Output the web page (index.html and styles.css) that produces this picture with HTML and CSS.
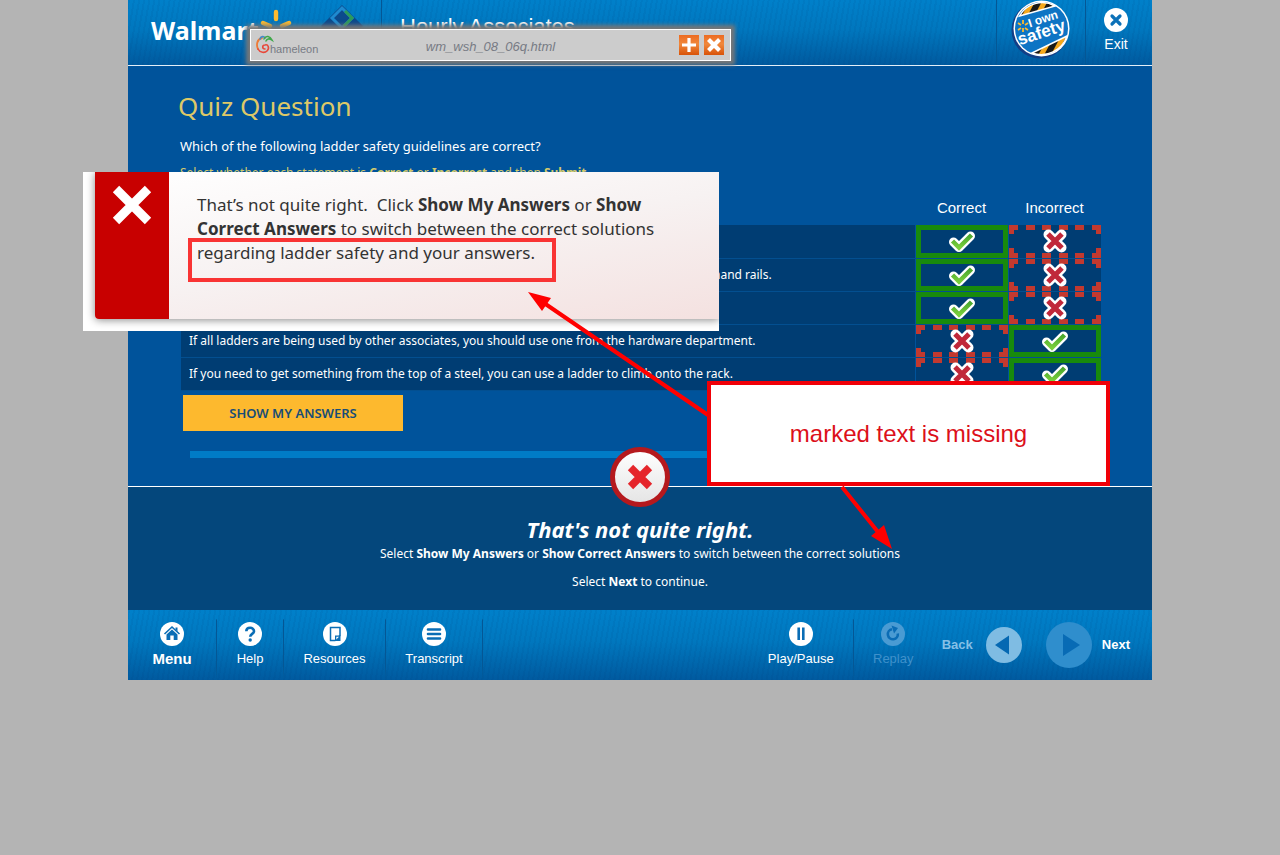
FILE: index.html
```html
<!DOCTYPE html>
<html lang="en">
<head>
<meta charset="utf-8">
<title>Quiz Question</title>
<link rel="stylesheet" href="styles.css">
</head>
<body>
<svg class="defs" aria-hidden="true">
  <defs>
    <linearGradient id="leaf" x1="0" y1="0" x2="0" y2="1"><stop offset="0" stop-color="#48a52d"/><stop offset="1" stop-color="#79cf3c"/></linearGradient>
    <linearGradient id="pearl" x1="0" y1="0" x2="0" y2="1"><stop offset="0" stop-color="#fff"/><stop offset="1" stop-color="#e4e4e4"/></linearGradient>
    <pattern id="hazard" width="11" height="11" patternUnits="userSpaceOnUse" patternTransform="rotate(28)"><rect width="11" height="11" fill="#f5a81c"/><rect width="6" height="11" fill="#1b1a18"/></pattern>
    <symbol id="check" viewBox="0 0 28 24">
      <path d="M5.500 13l5.500 5.500L22.500 7" fill="none" stroke="#fff" stroke-width="9" stroke-linecap="round" stroke-linejoin="round"/>
      <path d="M4.500 12l6.500 6.500L23.500 6" fill="none" stroke="url(#leaf)" stroke-width="4.500"/>
    </symbol>
    <symbol id="cross" viewBox="0 0 28 24">
      <path d="M7.500 5.500l13 13M20.500 5.500l-13 13" fill="none" stroke="#fff" stroke-width="10" stroke-linecap="round"/>
      <path d="M7 5l14 14M21 5L7 19" fill="none" stroke="#c0283a" stroke-width="5"/>
    </symbol>
  </defs>
</svg>
<main class="stage">
  <header class="top">
    <div class="brand">
      <span class="wordmark">Walmart</span>
      <svg class="spark" viewBox="0 0 32 34" width="32" height="34" stroke="#fdbb30" stroke-width="4.400" stroke-linecap="round"><path d="M16 4v7M16 25v7M3 15l7 3M22 22l7 3M29 15l-7 3M10 22l-7 3"/></svg>
      <svg class="diamond" viewBox="0 0 44 44" width="44" height="44"><path d="M22 1l21 21-21 21L1 22z" fill="#0c4a8c"/><path d="M22 4l10 10-10 10-10-10z" fill="none" stroke="#1e8ad0" stroke-width="3"/><path d="M25 7l7 7-8 8" fill="none" stroke="#2c9a5a" stroke-width="3"/></svg>
    </div>
    <h1 class="course">Hourly Associates</h1>
    <div class="safety">
      <svg viewBox="0 0 60 60" width="60" height="60" role="img" aria-label="I own safety">
        <circle cx="29" cy="30" r="28.500" fill="#123e86"/>
        <circle cx="30.500" cy="28.500" r="28" fill="#fff"/>
        <circle cx="30.500" cy="28.500" r="26.500" fill="#0d74c4"/>
        <path d="M8.500 16A26 26 0 0 1 44 6Z" fill="url(#hazard)" stroke="#fff" stroke-width="1.500"/>
        <path d="M21 53L56 36A27 27 0 0 1 21 53Z" fill="url(#hazard)" stroke="#fff" stroke-width="1.500"/>
        <path d="M12 20v4M12 28v4M7 23l3 2M14 28l3 2M17 23l-3 2M10 28l-3 2" stroke="#fdbb30" stroke-width="1.800"/>
        <g class="badge-text" transform="rotate(-18 30 30)"><text x="20" y="24" font-size="12">I own</text><text x="5" y="38" font-size="17">safety</text></g>
      </svg>
    </div>
    <button class="exit" type="button">
      <svg viewBox="0 0 24 24" width="24" height="24"><circle cx="12" cy="12" r="12" fill="#fff"/><path d="M8 8l8 8M16 8l-8 8" stroke="#0c71b8" stroke-width="3.200" stroke-linecap="round"/></svg>
      <span>Exit</span>
    </button>
  </header>

  <section class="quiz">
    <h2 class="quiz-title">Quiz Question</h2>
    <p class="question">Which of the following ladder safety guidelines are correct?</p>
    <p class="hint">Select whether each statement is <b>Correct</b> or <b>Incorrect</b> and then <b>Submit</b>.</p>
    <table class="answers">
      <colgroup><col><col class="choice"><col class="choice"></colgroup>
      <thead><tr><td></td><th scope="col">Correct</th><th scope="col">Incorrect</th></tr></thead>
      <tbody>
        <tr><td></td><td class="right"><svg><use href="#check"/></svg></td><td class="wrong"><svg><use href="#cross"/></svg></td></tr>
        <tr><td class="tail">hand rails.</td><td class="right"><svg><use href="#check"/></svg></td><td class="wrong"><svg><use href="#cross"/></svg></td></tr>
        <tr><td></td><td class="right"><svg><use href="#check"/></svg></td><td class="wrong"><svg><use href="#cross"/></svg></td></tr>
        <tr><td>If all ladders are being used by other associates, you should use one from the hardware department.</td><td class="wrong"><svg><use href="#cross"/></svg></td><td class="right"><svg><use href="#check"/></svg></td></tr>
        <tr><td>If you need to get something from the top of a steel, you can use a ladder to climb onto the rack.</td><td class="wrong"><svg><use href="#cross"/></svg></td><td class="right"><svg><use href="#check"/></svg></td></tr>
      </tbody>
    </table>
    <button class="show" type="button">SHOW MY ANSWERS</button>
    <div class="rule"></div>
  </section>

  <section class="feedback">
    <svg class="verdict" viewBox="0 0 60 60" width="60" height="60"><circle cx="30" cy="30" r="27.500" fill="url(#pearl)" stroke="#b5191d" stroke-width="5"/><path d="M20.500 20.500l19 19M39.500 20.500l-19 19" stroke="#e5252b" stroke-width="7.500"/></svg>
    <h3>That's not quite right.</h3>
    <p>Select <b>Show My Answers</b> or <b>Show Correct Answers</b> to switch between the correct solutions</p>
    <p>Select <b>Next</b> to continue.</p>
  </section>

  <nav class="controls">
    <button class="menu" type="button"><svg viewBox="0 0 24 24" width="24" height="24"><circle cx="12" cy="12" r="12" fill="#fff"/><path d="M4.500 12L12 5l7.500 7" fill="none" stroke="#0a6db5" stroke-width="1.600"/><path d="M15.500 5.500h2v4l-2-2zM12 7.500l5.500 5V18h-3.800v-4.500h-3.400V18H6.500v-5.500z" fill="#0a6db5"/></svg><span>Menu</span></button>
    <button class="help" type="button"><svg viewBox="0 0 24 24" width="24" height="24"><circle cx="12" cy="12" r="12" fill="#fff"/><path d="M8.300 9.300C8.300 4.600 16 4.700 16 9.200c0 2.600-3.800 2.800-3.800 5.600" fill="none" stroke="#0a6db5" stroke-width="2.600"/><circle cx="12.200" cy="18" r="1.700" fill="#0a6db5"/></svg><span>Help</span></button>
    <button class="resources" type="button"><svg viewBox="0 0 24 24" width="24" height="24"><circle cx="12" cy="12" r="12" fill="#fff"/><path d="M7.500 5.500h9.500v8l-5 5h-4.500z" fill="none" stroke="#0a6db5" stroke-width="1.500"/><path d="M12 19v-5.500h5.500V19z" fill="#0a6db5"/><path d="M13.300 17.500v-2.700h2.700z" fill="#fff"/></svg><span>Resources</span></button>
    <button class="transcript" type="button"><svg viewBox="0 0 24 24" width="24" height="24"><circle cx="12" cy="12" r="12" fill="#fff"/><path d="M6 7.500h12M6 12h12M6 16.500h12" stroke="#0a6db5" stroke-width="2.600" stroke-linecap="round"/></svg><span>Transcript</span></button>
    <button class="play" type="button"><svg viewBox="0 0 24 24" width="24" height="24"><circle cx="12" cy="12" r="12" fill="#fff"/><path d="M9.700 5.500v12.500M14.300 5.500v12.500" stroke="#0a6db5" stroke-width="2.600"/></svg><span>Play/Pause</span></button>
    <button class="replay" type="button" disabled><svg viewBox="0 0 24 24" width="24" height="24"><circle cx="12" cy="12" r="12" fill="#4a9bd3"/><path d="M11 7.300a5 5 0 1 0 5.800 4.200" fill="none" stroke="#0a6cb5" stroke-width="2.600"/><path d="M10.500 3.500l6.500 2.500-4 5.500z" fill="#0a6cb5"/></svg><span>Replay</span></button>
    <button class="back" type="button"><span>Back</span><svg viewBox="0 0 36 36" width="36" height="36"><circle cx="18" cy="18" r="18" fill="#7fbce3"/><path d="M23 8.500v19L9 18z" fill="#0568b2"/></svg></button>
    <button class="next" type="button"><svg viewBox="0 0 46 46" width="46" height="46"><circle cx="23" cy="23" r="23" fill="#2f8ecd"/><path d="M17 12v22l17-11z" fill="#086bb5"/></svg><span>Next</span></button>
  </nav>

  <div class="filebar">
    <span class="chameleon"><svg viewBox="0 0 18 20" width="18" height="20" fill="none" stroke-linecap="round"><path d="M6 3C1 4 0 10 2 14" stroke="#ee7a35" stroke-width="1.800"/><path d="M2 14c2 4 7 4 9 2 3-3 1-7-2-6-3 0-3 4 0 4" stroke="#e8483a" stroke-width="1.600"/><path d="M4 4c1-3 4-3 5-1" stroke="#468bc6" stroke-width="1.600"/><path d="M8 4c2-4 6-3 8 1-3-2-5-1-6 1" stroke="#3fa84a" stroke-width="1.600"/></svg><span>hameleon</span></span>
    <em>wm_wsh_08_06q.html</em>
    <span class="tools">
      <button type="button" aria-label="Add"><svg viewBox="0 0 20 20" width="20" height="20"><path d="M10 3v14M3 10h14" stroke="#fff" stroke-width="3.200"/></svg></button>
      <button type="button" aria-label="Close"><svg viewBox="0 0 20 20" width="20" height="20"><path d="M4.500 4.500l11 11M15.500 4.500l-11 11" stroke="#fff" stroke-width="4.200"/></svg></button>
    </span>
  </div>

  <aside class="paste">
    <div class="paste-card">
      <div class="paste-mark"><svg viewBox="0 0 40 40" width="40" height="40"><path d="M4 4l32 32M36 4L4 36" stroke="#fff" stroke-width="9"/></svg></div>
      <p>That’s not quite right.&nbsp; Click <b>Show My Answers</b> or <b>Show<br>Correct Answers</b> to switch between the correct solutions<br>regarding ladder safety and your answers.</p>
    </div>
  </aside>
  <div class="marker"></div>
  <svg class="arrows" viewBox="0 0 400 270" width="400" height="270" fill="red" stroke="red">
    <path d="M16 13L180 125M314 197L350 242" stroke-width="4" fill="none"/>
    <path d="M0 2L23 8 14 21zM364 259L343 246 356 235z" stroke="none"/>
  </svg>
  <div class="callout">marked text is missing</div>
</main>
</body>
</html>
```
FILE: styles.css
```css
* { box-sizing: border-box; }
body { margin: 0; background: #b4b4b4; color: #fff; font-family: "Noto Sans", "Open Sans", sans-serif; }
h1, h2, h3, p { margin: 0; font-weight: 400; }
button { padding: 0; border: 0; background: none; color: inherit; font: 13px "Liberation Sans", Arial, sans-serif; }
svg { display: block; flex: none; }
.defs { position: absolute; width: 0; height: 0; }

.stage { position: relative; width: 80%; margin: 0 auto; background: #00539b; }
.top, .controls {
  display: flex;
  background:
    repeating-linear-gradient(100deg, rgba(0, 50, 110, .07) 0 2px, transparent 2px 5px),
    linear-gradient(#0080ca, #0077be 45%, #005a9f);
}
.top { min-height: 66px; border-bottom: 1px solid #e4eff8; font-family: "Liberation Sans", Arial, sans-serif; }
.brand { display: flex; width: 254px; padding-left: 23px; border-right: 1px solid #045795; }
.wordmark { font: 700 25px/60px "Noto Sans", sans-serif; }
.spark { margin: 8px 0 0 2px; }
.diamond { margin: 4px 0 0 28px; }
.course { flex: 1; padding-left: 18px; font-size: 22px; line-height: 54px; }
.safety { width: 90px; padding-left: 14px; border: solid #045795; border-width: 0 1px; }
.badge-text { fill: #fff; font-family: "Liberation Sans", Arial, sans-serif; font-weight: 700; }
.exit { display: flex; flex-direction: column; align-items: center; width: 66px; padding: 8px 6px 0 0; gap: 4px; }
.exit span { font-size: 14px; line-height: 16px; }

.quiz { padding: 20px 51px 28px 53px; border-bottom: 1px solid #fff; }
.quiz-title { margin-left: -3px; color: #ddc868; font-size: 26px; line-height: 40px; }
.question { margin: 8px 0 2px -1px; font-size: 13px; line-height: 24px; }
.hint { margin-left: -1px; color: #d3ca6d; font-size: 12px; line-height: 26px; }
.answers { width: 100%; border-collapse: collapse; table-layout: fixed; font-size: 12px; }
.choice { width: 93px; }
.answers thead { height: 39px; font: 15px "Liberation Sans", Arial, sans-serif; }
.answers th { padding: 4px 0 0; font-weight: 400; }
.answers tbody tr { height: 33px; }
.answers tbody td { height: 33px; padding: 0 8px; background: #003d73; border-left: 1px solid #00539b; border-bottom: 1px solid #034f90; background-clip: padding-box; }
.answers tbody td:first-child { border-left: 0; }
.answers tbody .tail { padding-left: 532px; }
.answers tbody .right, .answers tbody .wrong { padding: 0; }
.answers td svg { width: 28px; height: 24px; margin: 0 auto; }
.right { box-shadow: inset 0 0 0 5px #188a0d; }
.answers tbody .wrong {
  background-image:
    repeating-linear-gradient(90deg, #c2392f 0 9px, transparent 9px calc((100% - 9px) / 5)),
    repeating-linear-gradient(90deg, #c2392f 0 9px, transparent 9px calc((100% - 9px) / 5)),
    linear-gradient(#c2392f 9px, transparent 9px 23px, #c2392f 23px),
    linear-gradient(#c2392f 9px, transparent 9px 23px, #c2392f 23px);
  background-position: 0 0, 0 100%, 0 0, 100% 0;
  background-size: 100% 5px, 100% 5px, 5px 100%, 5px 100%;
  background-repeat: no-repeat;
}
.show { display: block; width: 220px; height: 36px; margin: 4px 0 20px 2px; background: #fdb92e; color: #174d77; font: 600 13px "Noto Sans", sans-serif; }
.rule { height: 7px; margin: 0 2px 0 9px; background: #007cc7; }

.feedback { position: relative; min-height: 123px; padding-top: 25px; background: #04477c; text-align: center; }
.verdict { position: absolute; top: -40px; left: calc(50% - 30px); }
.feedback h3 { font-size: 22px; font-style: italic; font-weight: 700; line-height: 34px; }
.feedback p { font-size: 12px; line-height: 16px; margin-bottom: 12px; }

.controls { min-height: 70px; }
.controls button { display: flex; flex-direction: column; align-items: center; gap: 4px; padding-top: 12px; line-height: 17px; }
.menu, .help, .resources, .transcript, .play {
  border-right: 1px solid;
  border-image: linear-gradient(transparent 14%, #045795 15% 80%, transparent) 1;
}
.controls .menu { width: 89px; font-size: 15px; font-weight: 700; }
.help { width: 67px; }
.resources { width: 102px; }
.transcript { width: 97px; }
.play { width: 105px; margin-left: auto; }
.replay { width: 79px; color: #3f91cb; }
.controls .back, .controls .next { flex-direction: row; padding: 0; gap: 13px; font-weight: 700; }
.controls .back { margin-left: 9px; color: #86c0e6; }
.controls .next { margin: 0 22px 0 24px; gap: 10px; }

.filebar { position: absolute; top: 29px; left: 122px; display: flex; align-items: center; width: 481px; height: 32px; padding: 0 6px 0 5px; background: #ccc; border: 1px solid #fff; box-shadow: 0 0 4px 4px #777; color: #777b84; font: 13px "Liberation Sans", Arial, sans-serif; }
.chameleon { display: flex; align-items: center; width: 60px; font-size: 11px; }
.chameleon span { padding-top: 7px; margin-left: -4px; }
.filebar em { flex: 1; padding: 2px 14px 0 0; text-align: center; }
.tools { display: flex; gap: 5px; }
.tools button { background: linear-gradient(#ed6b21, #f0883c 45%, #d95308); }

.paste { position: absolute; top: 172px; left: -45px; width: 636px; height: 159px; padding: 0 0 12px 12px; background: #fff; color: #333; overflow: hidden; }
.paste-card { display: flex; height: 147px; background: linear-gradient(170deg, #fff, #f7f2f2 50%, #f4e1e0); border-radius: 0 0 0 4px; box-shadow: 0 1px 8px #888; }
.paste-mark { width: 74px; padding: 13px 0 0 17px; background: #c80000; border-radius: 0 0 0 4px; }
.paste p { padding: 21px 0 0 28px; font-size: 17px; line-height: 24px; white-space: nowrap; }
.marker { position: absolute; top: 238px; left: 60px; width: 368px; height: 44px; border: 4px solid #f93434; }
.arrows { position: absolute; top: 290px; left: 400px; pointer-events: none; }
.callout { position: absolute; top: 381px; left: 579px; display: flex; align-items: center; justify-content: center; width: 403px; height: 105px; background: #fff; border: 4px solid #f00008; color: #dc101a; font: 24px "Liberation Sans", Arial, sans-serif; }
```
